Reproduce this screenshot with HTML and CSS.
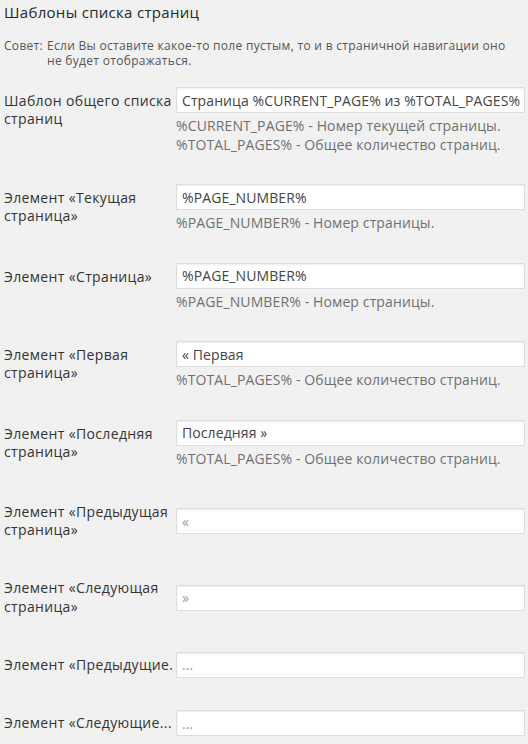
FILE: index.html
```html
<!DOCTYPE html>
<html lang="ru">
<head>
<meta charset="utf-8">
<title>Шаблоны списка страниц</title>
<link rel="stylesheet" href="styles.css">
</head>
<body>
<h3 class="title">Шаблоны списка страниц</h3>
<div class="tip"><span class="tip-label">Совет:</span><span class="tip-text">Если Вы оставите какое-то поле пустым, то и в страничной навигации оно не будет отображаться.</span></div>
<div class="form">
  <div class="row">
    <div class="th">Шаблон общего списка страниц</div>
    <div class="td">
      <input class="field" type="text" value="Страница %CURRENT_PAGE% из %TOTAL_PAGES%">
      <p class="desc">%CURRENT_PAGE% - Номер текущей страницы.<br>%TOTAL_PAGES% - Общее количество страниц.</p>
    </div>
  </div>
  <div class="row">
    <div class="th">Элемент «Текущая страница»</div>
    <div class="td">
      <input class="field" type="text" value="%PAGE_NUMBER%">
      <p class="desc">%PAGE_NUMBER% - Номер страницы.</p>
    </div>
  </div>
  <div class="row">
    <div class="th">Элемент «Страница»</div>
    <div class="td">
      <input class="field" type="text" value="%PAGE_NUMBER%">
      <p class="desc">%PAGE_NUMBER% - Номер страницы.</p>
    </div>
  </div>
  <div class="row">
    <div class="th">Элемент «Первая страница»</div>
    <div class="td">
      <input class="field" type="text" value="« Первая">
      <p class="desc">%TOTAL_PAGES% - Общее количество страниц.</p>
    </div>
  </div>
  <div class="row">
    <div class="th">Элемент «Последняя страница»</div>
    <div class="td">
      <input class="field" type="text" value="Последняя »">
      <p class="desc">%TOTAL_PAGES% - Общее количество страниц.</p>
    </div>
  </div>
  <div class="row">
    <div class="th">Элемент «Предыдущая страница»</div>
    <div class="td">
      <input class="field light" type="text" value="«">
    </div>
  </div>
  <div class="row">
    <div class="th">Элемент «Следующая страница»</div>
    <div class="td">
      <input class="field light" type="text" value="»">
    </div>
  </div>
  <div class="row">
    <div class="th clip">Элемент «Предыдущие...»</div>
    <div class="td">
      <input class="field light" type="text" value="...">
    </div>
  </div>
  <div class="row">
    <div class="th clip">Элемент «Следующие...»</div>
    <div class="td">
      <input class="field light" type="text" value="...">
    </div>
  </div>
</div>
</body>
</html>
```
FILE: styles.css
```css
html, body {
  margin: 0;
  padding: 0;
  background: #f1f1f1;
}
body {
  font-family: "Open Sans", "Liberation Sans", sans-serif;
  color: #444;
  padding: 0 3px 0 4px;
}
.title {
  margin: 1px 0 0;
  font-size: 15px;
  line-height: 22px;
  letter-spacing: 0.3px;
  font-weight: 400;
  color: #23282d;
}
.tip {
  display: flex;
  gap: 4px;
  margin-top: 15px;
  font-size: 12px;
  line-height: 15px;
  letter-spacing: 0.3px;
  color: #555;
}
.tip-label {
  flex: none;
}
.tip-text {
  max-width: 468px;
}
.form {
  margin-top: 4px;
}
.row {
  display: grid;
  grid-template-columns: 168px 349px;
  column-gap: 4px;
}
.th {
  align-self: start;
  padding: 20px 0;
  font-size: 14px;
  line-height: 18.2px;
  letter-spacing: 0.35px;
  color: #333;
  overflow: hidden;
}
.th.clip {
  white-space: nowrap;
}
.td {
  align-self: center;
  padding: 15px 0;
}
.field {
  display: block;
  box-sizing: border-box;
  width: 349px;
  height: 26px;
  margin: 0;
  padding: 3px 1px 3px 5px;
  border: 1px solid #ddd;
  background: #fff;
  box-shadow: inset 0 1px 2px rgba(0, 0, 0, 0.07);
  font-family: "Open Sans", "Liberation Sans", sans-serif;
  font-size: 14px;
  letter-spacing: 0.1px;
  color: #444;
  outline: none;
}
.field.light {
  color: #999;
}
.desc {
  margin: 4px 0 0;
  font-size: 14px;
  line-height: 18.5px;
  letter-spacing: 0.12px;
  color: #707070;
}
```
